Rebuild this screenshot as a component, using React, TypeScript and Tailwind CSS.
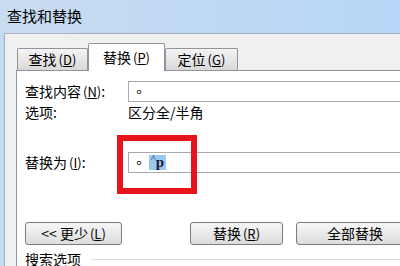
import React from "react";

const font = "font-['Noto_Sans_CJK_SC','Noto_Sans',sans-serif]";

function Key({ k }: { k: string }) {
  return (
    <span className="text-[13px] ml-[2px]">
      (<span className="underline">{k}</span>)
    </span>
  );
}

function Tab({
  label,
  k,
  active,
  width,
}: {
  label: string;
  k: string;
  active?: boolean;
  width: string;
}) {
  if (active) {
    return (
      <div
        className={`${width} shrink-0 h-[28px] -mb-px relative z-10 flex items-center justify-center bg-white border border-b-0 border-[#8e959e] rounded-t-[2px] text-[14px] text-black`}
      >
        {label}
        <Key k={k} />
      </div>
    );
  }
  return (
    <div
      className={`${width} shrink-0 h-[22px] flex items-center justify-center bg-gradient-to-b from-[#f4f4f4] to-[#d9d9d9] border border-b-0 border-[#8e959e] rounded-t-[2px] text-[14px] text-black`}
    >
      {label}
      <Key k={k} />
    </div>
  );
}

function Btn({ children, width }: { children: React.ReactNode; width: string }) {
  return (
    <div
      className={`${width} shrink-0 h-[23px] flex items-center justify-center rounded-[3px] border border-[#7b7b7b] bg-gradient-to-b from-[#f7f7f7] to-[#dcdcdc] text-[14px] text-black`}
    >
      {children}
    </div>
  );
}

export default function App() {
  return (
    <div
      className={`w-[400px] h-[266px] overflow-hidden relative bg-[#c3dbf3] ${font}`}
    >
      {/* title bar */}
      <div className="h-[33px] flex items-center pl-[7px] text-[15px] text-black bg-gradient-to-r from-[#c9dcf1] to-[#b6d6f7]">
        查找和替换
      </div>

      {/* dialog body */}
      <div className="ml-[4px] h-[233px] bg-[#f0f0f0] border-l border-t border-[#a7b2bf] pl-[11px] pt-[9px]">
        <div className="flex items-end h-[27px] pl-px">
          <Tab label="查找" k="D" width="w-[71px]" />
          <Tab label="替换" k="P" active width="w-[77px]" />
          <Tab label="定位" k="G" width="w-[73px]" />
        </div>

        {/* tab page */}
        <div className="h-[200px] bg-white border border-r-0 border-[#8e959e] pl-[8px] pt-[10px] text-[14px] text-black">
          <div className="flex items-center h-[21px]">
            <div className="w-[103px] shrink-0">
              查找内容<Key k="N" />:
            </div>
            <div className="flex-1 h-[21px] border border-r-0 border-[#a6a9ae] flex items-center pl-[3px] text-[14px] font-['Noto_Sans_CJK_TC',sans-serif]">
              。
            </div>
          </div>
          <div className="flex items-center h-[20px]">
            <div className="w-[103px] shrink-0">选项:</div>
            <div>区分全/半角</div>
          </div>

          <div className="flex items-center h-[21px] mt-[30px]">
            <div className="w-[103px] shrink-0">
              替换为<Key k="I" />:
            </div>
            <div className="flex-1 h-[21px] border border-r-0 border-[#a6a9ae] flex items-center pl-[3px] text-[14px]">
              <span className="font-['Noto_Sans_CJK_TC',sans-serif]">。</span>
              <span className="ml-[3px] h-[15px] flex items-center bg-[#99c8f0] px-[2px] font-['Liberation_Serif',serif] font-bold text-[15px] leading-none text-[#1a1a3a]">
                <span className="text-[10px] self-start mt-[-1px] font-normal">^</span>p
              </span>
            </div>
          </div>

          <div className="flex items-center h-[23px] mt-[49px]">
            <Btn width="w-[97px]">
              &lt;&lt; 更少<Key k="L" />
            </Btn>
            <div className="ml-[68px] shrink-0">
              <Btn width="w-[93px]">
                替换<Key k="R" />
              </Btn>
            </div>
            <div className="ml-[13px] shrink-0">
              <Btn width="w-[118px]">全部替换</Btn>
            </div>
          </div>

          <div className="flex items-center h-[16px] mt-[6px]">
            <span className="shrink-0">搜索选项</span>
            <div className="flex-1 ml-[10px] h-px bg-[#d5dfe5]" />
          </div>
        </div>
      </div>

      {/* red highlight frame drawn over the dialog */}
      <div className="absolute left-[117px] top-[135px] w-[80px] h-[59px] border-[6px] border-[#e8141c]" />
    </div>
  );
}
